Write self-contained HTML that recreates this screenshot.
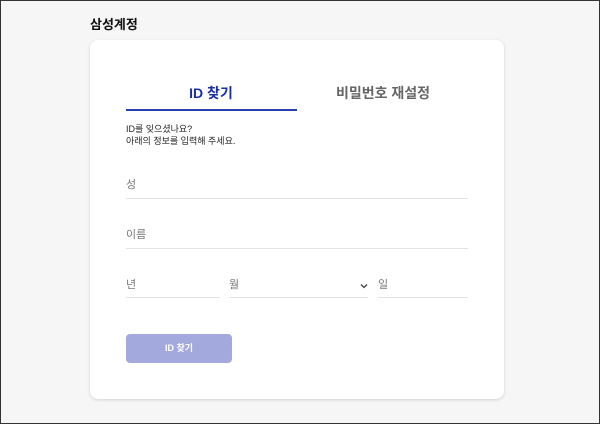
<!DOCTYPE html>
<html><head><meta charset="utf-8"><style>
*{margin:0;padding:0;box-sizing:border-box}
body{width:600px;height:424px;background:#f6f6f6;position:relative;overflow:hidden;font-family:"Liberation Sans","Noto Sans CJK KR",sans-serif}
.frame{position:absolute;left:0;top:0;width:600px;height:424px;border:1px solid #333;pointer-events:none}
.abs{position:absolute}
.title{left:90px;top:14px;font-size:13px;font-weight:bold;color:#111}
.card{left:90px;top:40px;width:414px;height:359px;background:#fff;border-radius:8px;box-shadow:0 1px 3px rgba(0,0,0,.15)}
.tab{font-size:14px;font-weight:bold;top:83px;width:172px;text-align:center}
.line{height:1px;background:#e3e3e3}
.ph{font-size:11px;color:#777}
</style></head><body>
<div class="abs title">삼성계정</div>
<div class="abs card"></div>
<div class="abs tab" style="left:125px;color:#1a2fa0">ID 찾기</div>
<div class="abs tab" style="left:297px;color:#666">비밀번호 재설정</div>
<div class="abs" style="left:126px;top:109px;width:171px;height:2px;background:#2b3fb0"></div>
<div class="abs" style="left:126px;top:123px;font-size:9px;color:#222;line-height:12px">ID를 잊으셨나요?<br>아래의 정보를 입력해 주세요.</div>
<div class="abs ph" style="left:126px;top:176px">성</div>
<div class="abs line" style="left:126px;top:198px;width:342px"></div>
<div class="abs ph" style="left:126px;top:226px">이름</div>
<div class="abs line" style="left:126px;top:248px;width:342px"></div>
<div class="abs ph" style="left:126px;top:276px">년</div>
<div class="abs ph" style="left:229px;top:276px">월</div>
<div class="abs ph" style="left:378px;top:276px">일</div>
<svg class="abs" style="left:360px;top:283px" width="8" height="6"><path d="M1 1.5L4 4.5L7 1.5" stroke="#444" stroke-width="1.3" fill="none"/></svg>
<div class="abs line" style="left:126px;top:297px;width:94px"></div>
<div class="abs line" style="left:229px;top:297px;width:139px"></div>
<div class="abs line" style="left:378px;top:297px;width:90px"></div>
<div class="abs" style="left:126px;top:334px;width:106px;height:29px;background:#a3a9dc;border-radius:4px;color:#fff;font-size:9px;font-weight:bold;text-align:center;line-height:29px">ID 찾기</div>
<div class="frame"></div>
</body></html>
